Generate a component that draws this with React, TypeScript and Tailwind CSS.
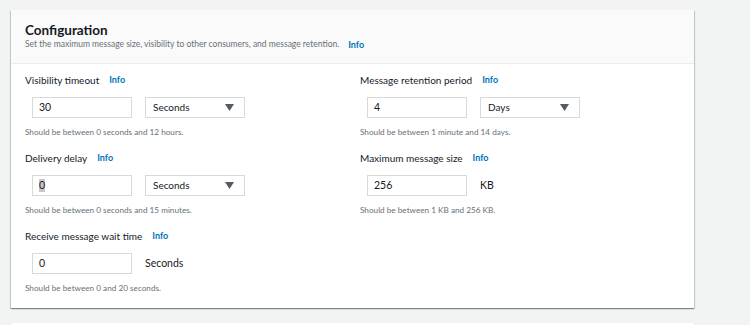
import React from "react";

const font = { fontFamily: 'Lato, "Liberation Sans", sans-serif' };

function Info({ gap = "ml-[10px]" }: { gap?: string }) {
  return <span className={`${gap} text-[9px] font-bold text-[#0073bb]`}>Info</span>;
}

function Caret() {
  return (
    <svg width="9" height="7" viewBox="0 0 9 7" className="ml-auto">
      <polygon points="0,0 9,0 4.5,7" fill="#545b64" />
    </svg>
  );
}

function Field({
  label,
  value,
  unit,
  select,
  help,
  selected,
}: {
  label: string;
  value: string;
  unit: string;
  select?: boolean;
  help: string;
  selected?: boolean;
}) {
  return (
    <div className="flex flex-col">
      <div className="flex h-4 items-center text-[10px] text-[#16191f]">
        {label}
        <Info />
      </div>
      <div className="mt-[9px] flex h-[21px] items-center pl-[7px]">
        <div className="flex h-[21px] w-[100px] items-center border border-[#d5dbdb] bg-white pl-[6px] text-[10.5px] text-[#16191f]">
          {selected ? <span className="bg-[#c8c8c8] leading-[13px]">{value}</span> : value}
        </div>
        {select ? (
          <div className="ml-[13px] flex h-[21px] w-[100px] items-center border border-[#d5dbdb] bg-white px-[7px] pr-[10px] text-[10px] text-[#16191f]">
            {unit}
            <Caret />
          </div>
        ) : (
          <div className="ml-[13px] text-[10.5px] text-[#16191f]">{unit}</div>
        )}
      </div>
      <div className="mt-[8px] flex h-3 items-center text-[8.2px] text-[#687078]">{help}</div>
    </div>
  );
}

export default function App() {
  return (
    <div className="h-[325px] w-[750px] overflow-hidden bg-[#f2f3f3] pl-[11px] pt-[10px]" style={font}>
      <div className="w-[683px] bg-white shadow-[0_1px_1px_0_rgba(0,28,36,0.3),1px_1px_1px_0_rgba(0,28,36,0.15),-1px_1px_1px_0_rgba(0,28,36,0.15)]">
        <div className="h-[54px] border-b border-[#eaeded] bg-[#fafafa] px-[14px] pt-[11px]">
          <div className="text-[13.5px] font-bold leading-[18px] text-[#16191f]">Configuration</div>
          <div className="-mt-[1px] flex items-center text-[8.5px] text-[#687078]">
            Set the maximum message size, visibility to other consumers, and message retention.
            <Info gap="ml-[9px]" />
          </div>
        </div>
        <div className="grid grid-cols-[335px_1fr] px-[14px] pb-[14px] pt-[8px]">
          <div className="flex flex-col gap-[12px]">
            <Field label="Visibility timeout" value="30" unit="Seconds" select help="Should be between 0 seconds and 12 hours." />
            <Field label="Delivery delay" value="0" unit="Seconds" select selected help="Should be between 0 seconds and 15 minutes." />
            <Field label="Receive message wait time" value="0" unit="Seconds" help="Should be between 0 and 20 seconds." />
          </div>
          <div className="flex flex-col gap-[12px]">
            <Field label="Message retention period" value="4" unit="Days" select help="Should be between 1 minute and 14 days." />
            <Field label="Maximum message size" value="256" unit="KB" help="Should be between 1 KB and 256 KB." />
          </div>
        </div>
      </div>
      <div className="mt-[15px] h-[40px] w-[683px] bg-white shadow-[0_1px_1px_0_rgba(0,28,36,0.3)]" />
    </div>
  );
}
